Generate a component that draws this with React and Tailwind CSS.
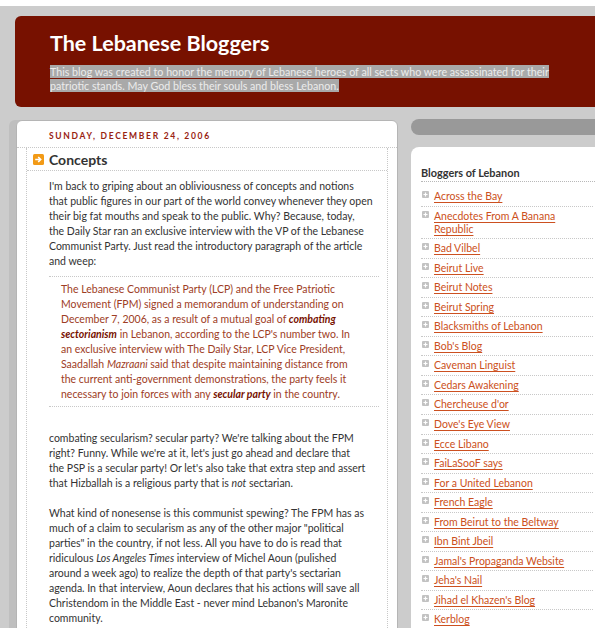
const bloggers = [
  "Across the Bay",
  "Anecdotes From A Banana Republic",
  "Bad Vilbel",
  "Beirut Live",
  "Beirut Notes",
  "Beirut Spring",
  "Blacksmiths of Lebanon",
  "Bob's Blog",
  "Caveman Linguist",
  "Cedars Awakening",
  "Chercheuse d'or",
  "Dove's Eye View",
  "Ecce Libano",
  "FaiLaSooF says",
  "For a United Lebanon",
  "French Eagle",
  "From Beirut to the Beltway",
  "Ibn Bint Jbeil",
  "Jamal's Propaganda Website",
  "Jeha's Nail",
  "Jihad el Khazen's Blog",
  "Kerblog",
];

function ArrowIcon() {
  return (
    <svg width="11" height="11" viewBox="0 0 11 11" className="shrink-0">
      <rect width="11" height="11" rx="1.5" fill="#f29a16" />
      <path
        d="M2.2 5.5h5.2M5.2 3l2.5 2.5L5.2 8"
        stroke="#fff"
        strokeWidth="1.6"
        fill="none"
      />
    </svg>
  );
}

function PlusIcon() {
  return (
    <svg width="7" height="7" viewBox="0 0 7 7" className="mt-[1px] shrink-0">
      <rect width="7" height="7" rx="1" fill="#c2c2c2" />
      <path d="M3.5 1.5v4M1.5 3.5h4" stroke="#fff" strokeWidth="1.2" />
    </svg>
  );
}

export default function App() {
  return (
    <div className="h-[628px] overflow-hidden bg-[#cccccc] font-['Lato',sans-serif]">
      <div className="h-[6px] bg-white" />
      <div className="ml-[15px] mt-[10px] h-[91px] rounded-l-[6px] bg-[#771100] pl-[35px] pt-[14px]">
        <h1 className="text-[21.5px] font-bold leading-[26px] text-white">
          The Lebanese Bloggers
        </h1>
        <p className="mt-[9px] w-[515px] text-[10.7px] leading-[14px]">
          <span className="bg-[#a9a9a9] text-[#ececec]">
            This blog was created to honor the memory of Lebanese heroes of all
            sects who were assassinated for their patriotic stands. May God
            bless their souls and bless Lebanon.
          </span>
        </p>
      </div>

      <div className="mt-[13px] flex gap-[13px]">
        <main className="ml-[16px] h-[560px] w-[382px] shrink-0 rounded-t-[6px] border border-[#b5b5b5] bg-white shadow-[-7px_0_0_#bfbfbf]">
          <div className="h-[27px] border-b border-dotted border-[#c8c8c8] pl-[32px] pt-[10px] text-[8.5px] font-bold leading-[11px] tracking-[1.7px] text-[#992211]">
            SUNDAY, DECEMBER 24, 2006
          </div>
          <div className="mx-[9px] h-full border-x border-dotted border-[#c8c8c8]">
            <div className="flex h-[23px] items-center gap-[5px] border-b border-dotted border-[#c8c8c8] pl-[6px]">
              <ArrowIcon />
              <h2 className="text-[14px] font-bold text-[#333333]">Concepts</h2>
            </div>
            <div className="whitespace-nowrap pl-[22px] pr-[8px] pt-[8px] text-[10.5px] leading-[15px] text-[#333333]">
              <p>
                I'm back to griping about an obliviousness of concepts and notions
                <br />
                that public figures in our part of the world convey whenever they open
                <br />
                their big fat mouths and speak to the public. Why? Because, today,
                <br />
                the Daily Star ran an exclusive interview with the VP of the Lebanese
                <br />
                Communist Party. Just read the introductory paragraph of the article
                <br />
                and weep:
              </p>
              <blockquote className="mt-[7px] border-y border-dotted border-[#c8c8c8] pb-[4px] pl-[12px] pr-[6px] pt-[5px] text-[#9e3d25]">
                The Lebanese Communist Party (LCP) and the Free Patriotic
                <br />
                Movement (FPM) signed a memorandum of understanding on
                <br />
                December 7, 2006, as a result of a mutual goal of{" "}
                <b className="italic text-[#771100]">
                  combating
                  <br />
                  sectorianism
                </b>{" "}
                in Lebanon, according to the LCP's number two. In
                <br />
                an exclusive interview with The Daily Star, LCP Vice President,
                <br />
                Saadallah <i>Mazraani</i> said that despite maintaining distance from
                <br />
                the current anti-government demonstrations, the party feels it
                <br />
                necessary to join forces with any{" "}
                <b className="italic text-[#771100]">secular party</b> in the
                country.
              </blockquote>
              <p className="mt-[24px]">
                combating secularism? secular party? We're talking about the FPM
                <br />
                right? Funny. While we're at it, let's just go ahead and declare that
                <br />
                the PSP is a secular party! Or let's also take that extra step and assert
                <br />
                that Hizballah is a religious party that is <i>not</i> sectarian.
              </p>
              <p className="mt-[15px]">
                What kind of nonesense is this communist spewing? The FPM has as
                <br />
                much of a claim to secularism as any of the other major "political
                <br />
                parties" in the country, if not less. All you have to do is read that
                <br />
                ridiculous <i>Los Angeles Times</i> interview of Michel Aoun (pulished
                <br />
                around a week ago) to realize the depth of that party's sectarian
                <br />
                agenda. In that interview, Aoun declares that his actions will save all
                <br />
                Christendom in the Middle East - never mind Lebanon's Maronite
                <br />
                community.
              </p>
            </div>
          </div>
        </main>

        <aside className="-mt-[1px] w-[200px] shrink-0">
          <div className="h-[16px] rounded-l-[8px] bg-[#999999]" />
          <div className="mt-[12px] h-[520px] rounded-tl-[8px] bg-white pl-[10px] pt-[19px]">
            <h2 className="border-b border-dotted border-[#b8b8b8] pb-[1px] text-[10.9px] font-bold leading-[14px] text-[#333333]">
              Bloggers of Lebanon
            </h2>
            <ul className="mt-[5px] w-[172px]">
              {bloggers.map((name) => (
                <li
                  key={name}
                  className="flex gap-[5px] border-b border-dotted border-[#c8c8c8] pb-[2.55px] pl-[1px] pt-[3px] text-[10.5px] leading-[13px]"
                >
                  <PlusIcon />
                  <a
                    href="#"
                    className="text-[#cc5020] underline underline-offset-[2px]"
                  >
                    {name}
                  </a>
                </li>
              ))}
            </ul>
          </div>
        </aside>
      </div>
    </div>
  );
}
